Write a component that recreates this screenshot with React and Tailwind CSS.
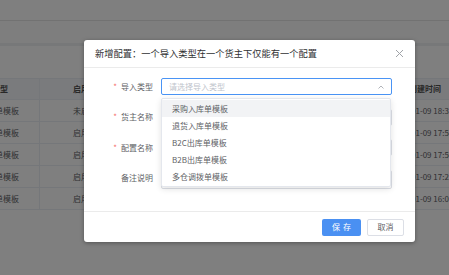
export default function App() {
  const font = { fontFamily: '"Noto Sans CJK SC", "Noto Sans", sans-serif' };
  const rows = [
    ["采购入库单模板", "未启用", "01-09 18:35:21"],
    ["退货入库单模板", "启用", "01-09 17:58:02"],
    ["B2C出库单模板", "启用", "01-09 17:50:44"],
    ["B2B出库单模板", "启用", "01-09 17:23:10"],
    ["多仓调拨单模板", "启用", "01-09 16:05:37"],
  ];
  const items = ["采购入库单模板", "退货入库单模板", "B2C出库单模板", "B2B出库单模板", "多仓调拨单模板"];
  return (
    <div className="relative w-[449px] h-[275px] overflow-hidden bg-white" style={font}>
      {/* background page */}
      <div className="h-[21px] border-b border-[#e4e4e4]" />
      <div className="h-[22px] bg-[#fcfcfc]" />
      <div className="h-[3px] bg-[#eef0f3]" />
      <div className="h-[32px]" />
      <div className="text-[8px] text-[#606266]">
        <div className="flex h-[22px] items-center bg-[#f5f7fa] border-y border-[#ebeef5] font-bold text-[#505050]">
          <div className="w-[40px] shrink-0 h-full flex items-center justify-end overflow-hidden pr-[31px] border-r border-[#ebeef5] whitespace-nowrap">导入类型</div>
          <div className="w-[369px] shrink-0 pl-[33px] whitespace-nowrap">启用状态</div>
          <div className="shrink-0 whitespace-nowrap">创建时间</div>
        </div>
        {rows.map((r, i) => (
          <div key={i} className="flex h-[22px] items-center border-b border-[#ebeef5]">
            <div className="w-[40px] shrink-0 h-full flex items-center justify-end overflow-hidden pr-[20px] border-r border-[#ebeef5] whitespace-nowrap">{r[0]}</div>
            <div className="w-[371px] shrink-0 pl-[33px] whitespace-nowrap">{r[1]}</div>
            <div className="shrink-0 whitespace-nowrap">{r[2]}</div>
          </div>
        ))}
      </div>

      {/* overlay */}
      <div className="absolute inset-0 bg-black/50">
        <div className="ml-[84px] mt-[40px] w-[331px] h-[202px] bg-white rounded-[3px] shadow-[0_1px_4px_rgba(0,0,0,0.35)] flex flex-col">
          {/* header */}
          <div className="h-[28px] flex items-center justify-between pl-[11px] pr-[11px] border-b border-[#ebebeb]">
            <span className="text-[9.25px] text-[#303133]">新增配置：一个导入类型在一个货主下仅能有一个配置</span>
            <svg width="9" height="9" viewBox="0 0 9 9">
              <path d="M1 1 L8 8 M8 1 L1 8" stroke="#a0a3a8" strokeWidth="1" fill="none" />
            </svg>
          </div>
          {/* body */}
          <div className="flex-1 pt-[10px] flex flex-col gap-[13.5px] text-[8px]">
            <div className="flex">
              <div className="w-[69px] h-[17px] flex items-center justify-end text-[#606266]">
                <span className="text-[#f56c6c] mr-[4px]">*</span>导入类型
              </div>
              <div className="relative ml-[8px] w-[231px]">
                <div className="h-[17px] rounded-[2px] border border-[#4a94f5] flex items-center justify-between pl-[7px] pr-[7px]">
                  <span className="text-[#c0c4cc]">请选择导入类型</span>
                  <svg width="6" height="4" viewBox="0 0 6 4">
                    <path d="M0.5 3.5 L3 1 L5.5 3.5" stroke="#a8abb2" strokeWidth="0.9" fill="none" />
                  </svg>
                </div>
                <div className="absolute left-0 top-[20px] w-[230px] z-10 bg-white border border-[#e4e7ed] rounded-[2px] shadow-[0_2px_6px_rgba(0,0,0,0.12)] py-[1px]">
                  {items.map((t, i) => (
                    <div key={i} className={`h-[17px] flex items-center pl-[10px] text-[#606266] ${i === 0 ? "bg-[#f2f3f5]" : ""}`}>{t}</div>
                  ))}
                </div>
              </div>
            </div>
            <div className="flex">
              <div className="w-[69px] h-[17px] flex items-center justify-end text-[#606266]">
                <span className="text-[#f56c6c] mr-[4px]">*</span>货主名称
              </div>
              <div className="ml-[8px] w-[231px] h-[17px] rounded-[2px] border border-[#dcdfe6]" />
            </div>
            <div className="flex">
              <div className="w-[69px] h-[17px] flex items-center justify-end text-[#606266]">
                <span className="text-[#f56c6c] mr-[4px]">*</span>配置名称
              </div>
              <div className="ml-[8px] w-[231px] h-[17px] rounded-[2px] border border-[#dcdfe6]" />
            </div>
            <div className="flex">
              <div className="w-[69px] h-[17px] flex items-center justify-end text-[#606266]">备注说明</div>
              <div className="ml-[8px] w-[231px] h-[19px] rounded-[2px] border border-[#dcdfe6]" />
            </div>
          </div>
          {/* footer */}
          <div className="h-[31px] border-t border-[#ebebeb] flex items-center justify-end gap-[6px] pr-[11px] text-[8px]">
            <div className="w-[39px] h-[17px] rounded-[2px] bg-[#4a90f2] text-white flex items-center justify-center gap-[3px]">
              <span>保</span><span>存</span>
            </div>
            <div className="w-[37px] h-[17px] rounded-[2px] border border-[#dcdfe6] text-[#606266] flex items-center justify-center">取消</div>
          </div>
        </div>
      </div>
    </div>
  );
}
